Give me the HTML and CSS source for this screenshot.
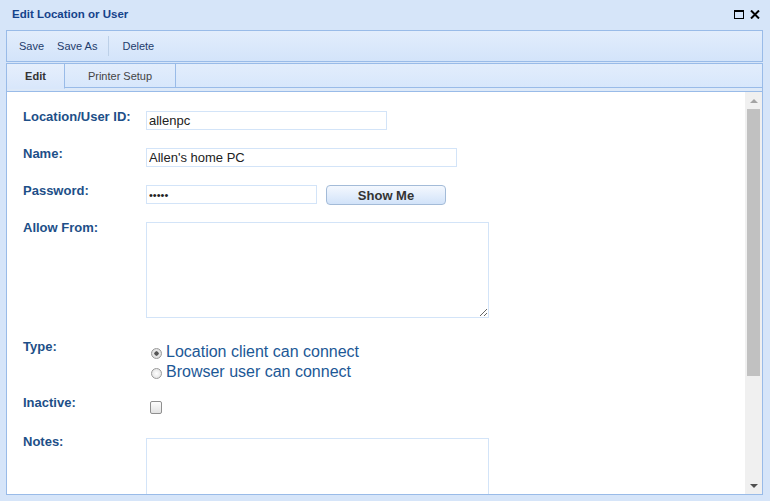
FILE: index.html
```html
<!DOCTYPE html>
<html lang="en">
<head>
    <meta charset="UTF-8">
    <title>Edit Location or User</title>
    <link rel="stylesheet" href="styles.css">
</head>
<body>
    <div class="window">
        <div class="titlebar">
            <div class="title">Edit Location or User</div>
            <div class="tools">
                <svg width="10" height="9" viewBox="0 0 10 9"><rect x="0.5" y="0.5" width="9" height="8" fill="none" stroke="#000"/><rect x="0" y="0" width="10" height="2" fill="#000"/></svg>
                <svg width="10" height="9" viewBox="0 0 10 9"><path d="M1 0.5 L9 8.5 M9 0.5 L1 8.5" stroke="#000" stroke-width="2"/></svg>
            </div>
        </div>

        <div class="toolbar">
            <span class="tbtn">Save</span>
            <span class="tbtn">Save As</span>
            <span class="sep"></span>
            <span class="tbtn">Delete</span>
        </div>

        <div class="tabs-wrap">
            <div class="tabs">
                <div class="tab active">Edit</div>
                <div class="tab">Printer Setup</div>
            </div>
            <div class="band"></div>
        </div>

        <div class="content">
            <div class="form">
                <div class="row r1">
                    <label class="lbl">Location/User ID:</label>
                    <input class="txt w-id" type="text" value="allenpc">
                </div>
                <div class="row r2">
                    <label class="lbl">Name:</label>
                    <input class="txt w-name" type="text" value="Allen's home PC">
                </div>
                <div class="row r3">
                    <label class="lbl">Password:</label>
                    <input class="txt w-pass" type="password" value="12345">
                    <button class="show">Show Me</button>
                </div>
                <div class="row r4">
                    <label class="lbl">Allow From:</label>
                    <textarea class="area"></textarea>
                </div>
                <div class="row r5">
                    <label class="lbl">Type:</label>
                    <div class="radios">
                        <label class="opt"><input type="radio" name="type" checked> Location client can connect</label>
                        <label class="opt"><input type="radio" name="type"> Browser user can connect</label>
                    </div>
                </div>
                <div class="row r6">
                    <label class="lbl">Inactive:</label>
                    <input class="chk" type="checkbox">
                </div>
                <div class="row r7">
                    <label class="lbl">Notes:</label>
                    <textarea class="area notes"></textarea>
                </div>
            </div>
            <div class="scrollbar">
                <div class="arrow up"></div>
                <div class="thumb"></div>
                <div class="track"></div>
                <div class="arrow down"></div>
            </div>
        </div>
    </div>
</body>
</html>
```

FILE: styles.css
```css
body {
margin: 0;
background-color: #d6e5f9;
font-family: "Liberation Sans", Arial, sans-serif;
}

.window {
width: 770px;
height: 501px;
overflow: hidden;
}

.titlebar {
height: 30px;
display: flex;
align-items: center;
justify-content: space-between;
padding: 0 10px 0 12px;
}

.title {
font-size: 11.5px;
font-weight: bold;
color: #15428b;
margin-top: -2px;
}

.tools {
display: flex;
gap: 6px;
margin-top: -2px;
}

.toolbar {
height: 30px;
margin: 0 7px 1px 6px;
border: solid 1px #99bbe8;
background: linear-gradient(#e2edfc, #d3e4fa);
display: flex;
align-items: center;
padding-left: 12px;
}

.tbtn {
font-size: 11px;
color: #1e3c6c;
margin-right: 13px;
}

.sep {
width: 1px;
height: 20px;
background-color: #bcd0e8;
margin: 0 13px 0 -2px;
}

.tabs-wrap {
margin: 0 7px 0 6px;
border: solid 1px #99bbe8;
border-bottom: none;
background: linear-gradient(#e2edfc, #d6e6fb);
}

.tabs {
display: flex;
height: 23px;
border-bottom: solid 1px #99bbe8;
}

.tab {
font-size: 11px;
color: #444;
border-right: solid 1px #99bbe8;
display: flex;
align-items: center;
justify-content: center;
width: 110px;
}

.tab.active {
width: 57px;
font-weight: bold;
color: #333;
background: linear-gradient(#e6effc, #d9e7fb);
border-bottom: solid 1px #d9e7fb;
height: 24px;
}

.band {
height: 3px;
background-color: #dde9f8;
}

.content {
margin: 0 7px 0 6px;
height: 402px;
border: solid 1px #99bbe8;
background-color: #fff;
display: flex;
}

.form {
flex: 1;
overflow: hidden;
padding: 18px 0 0 16px;
}

.row {
display: flex;
align-items: flex-start;
}

.lbl {
width: 123px;
flex-shrink: 0;
font-size: 13px;
font-weight: bold;
line-height: 14px;
color: #1d4f88;
}

.txt {
box-sizing: border-box;
height: 19px;
margin-top: 1px;
border: solid 1px #d3e4f8;
padding: 0 2px;
font-family: "Liberation Sans", Arial, sans-serif;
font-size: 13px;
color: #222;
outline: none;
}

.w-id { width: 241px; }
.w-name { width: 311px; }
.w-pass { width: 171px; font-size: 11px; }

.show {
box-sizing: border-box;
width: 120px;
height: 20px;
margin: 1px 0 0 9px;
border: solid 1px #a3bbd8;
border-radius: 4px;
background: linear-gradient(#f4f8fe, #d2e3f9);
font-family: "Liberation Sans", Arial, sans-serif;
font-size: 13px;
font-weight: bold;
color: #333;
padding: 0;
}

.area {
box-sizing: border-box;
width: 343px;
height: 96px;
margin-top: 1px;
border: solid 1px #d3e4f8;
outline: none;
}

.r1 { margin-bottom: 17px; }
.r2 { margin-bottom: 17px; }
.r3 { margin-bottom: 16px; }
.r4 { margin-bottom: 22px; }
.r5 { margin-bottom: 14px; }
.r6 { margin-bottom: 21px; }

.notes {
margin-top: 3px;
height: 120px;
}

.radios {
display: flex;
flex-direction: column;
margin: 2px 0 0 5px;
}

.opt {
font-size: 16px;
line-height: 20px;
color: #1c5896;
display: flex;
align-items: center;
}

.opt input {
appearance: none;
width: 11px;
height: 11px;
margin: 0 4px 0 0;
border: solid 1px #9a9a9a;
border-radius: 50%;
background: radial-gradient(#fff, #dcdcdc);
position: relative;
top: 1px;
}

.opt input:checked {
background: radial-gradient(#555 30%, #e8e8e8 38%, #d6d6d6);
}

.chk {
appearance: none;
box-sizing: border-box;
width: 12px;
height: 13px;
margin: 5px 0 0 4px;
border: solid 1px #8f8f8f;
border-radius: 2px;
background: linear-gradient(#fdfdfd, #e2e2e2);
}

.scrollbar {
width: 17px;
background-color: #f0f0f0;
display: flex;
flex-direction: column;
align-items: center;
}

.arrow {
height: 17px;
display: flex;
align-items: center;
justify-content: center;
}

.arrow.up::after {
content: "";
border-left: 4px solid transparent;
border-right: 4px solid transparent;
border-bottom: 4px solid #a3a3a3;
}

.arrow.down::after {
content: "";
border-left: 4px solid transparent;
border-right: 4px solid transparent;
border-top: 4px solid #505050;
}

.thumb {
width: 13px;
height: 267px;
background-color: #c1c1c1;
}

.track {
flex: 1;
}
```
